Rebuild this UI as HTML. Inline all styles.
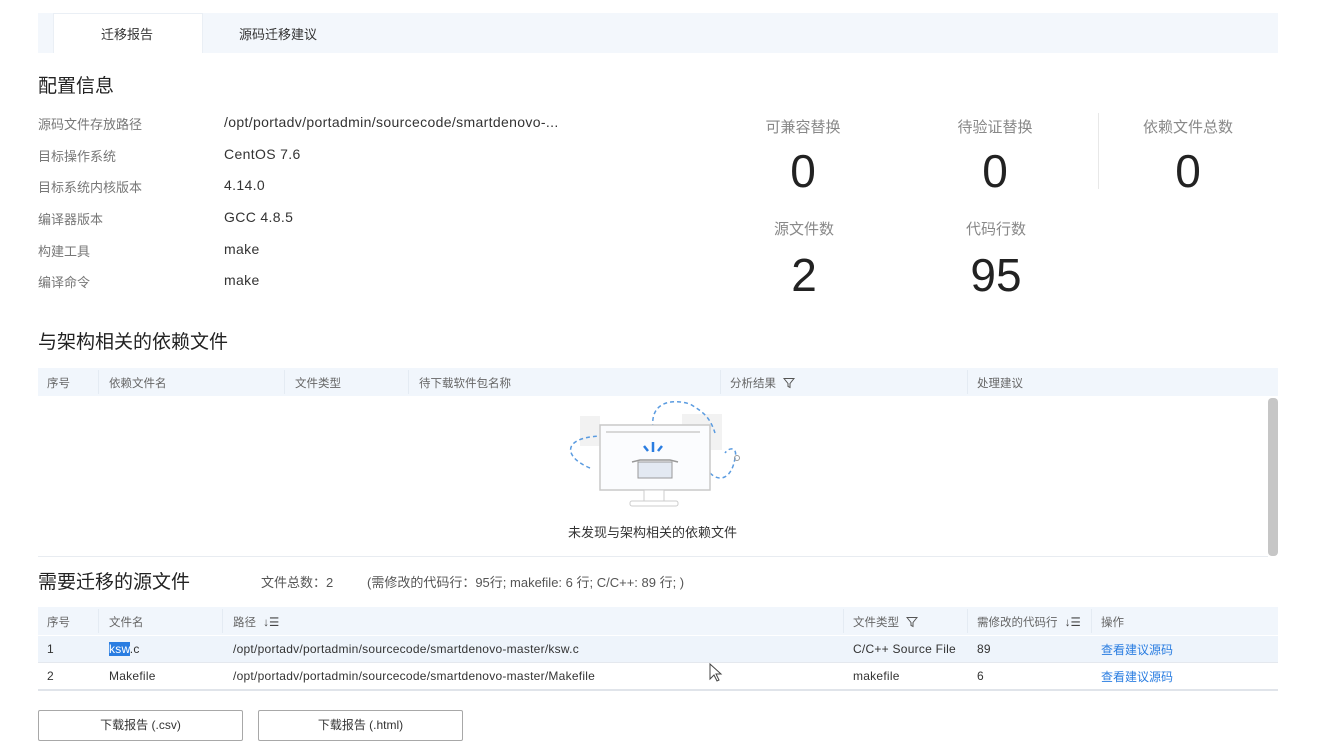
<!DOCTYPE html>
<html><head><meta charset="utf-8"><style>
*{margin:0;padding:0;box-sizing:border-box}
body{width:1324px;height:742px;background:#fff;position:relative;overflow:hidden;font-family:"Liberation Sans","Noto Sans CJK SC",sans-serif;color:#333;font-size:13px}
.a{position:absolute;white-space:nowrap}
.lbl{color:#777;font-size:13px}
.val{color:#333;font-size:14px;letter-spacing:0.35px}
.h{font-size:19px;color:#222}
.sl{color:#888;font-size:15px;transform:translateX(-50%)}
.sn{font-size:46px;color:#222;transform:translateX(-50%);line-height:1}
.th{color:#666;font-size:11.5px}
.sep{position:absolute;width:1px;background:#e4ebf3}
.td{font-size:12px;color:#333;letter-spacing:0.25px}
.lk{font-size:12px;color:#2a7de1}
.btn{position:absolute;border:1px solid #a8a8a8;border-radius:2px;font-size:12px;color:#333;text-align:center;line-height:28px}
</style></head><body>
<div class="a" style="left:38px;top:13px;width:1240px;height:40px;background:#f3f7fc"></div>
<div class="a" style="left:53px;top:13px;width:150px;height:40px;background:#fff;border:1px solid #eaeff5;border-bottom:none"></div>
<div class="a" style="left:101px;top:24px;font-size:13px;color:#333">迁移报告</div>
<div class="a" style="left:239px;top:24px;font-size:13px;color:#333">源码迁移建议</div>

<div class="a h" style="left:38px;top:71px">配置信息</div>
<div class="a lbl" style="left:38px;top:114px">源码文件存放路径</div><div class="a val" style="left:224px;top:114px">/opt/portadv/portadmin/sourcecode/smartdenovo-...</div>
<div class="a lbl" style="left:38px;top:146px">目标操作系统</div><div class="a val" style="left:224px;top:146px">CentOS 7.6</div>
<div class="a lbl" style="left:38px;top:177px">目标系统内核版本</div><div class="a val" style="left:224px;top:177px">4.14.0</div>
<div class="a lbl" style="left:38px;top:209px">编译器版本</div><div class="a val" style="left:224px;top:209px">GCC 4.8.5</div>
<div class="a lbl" style="left:38px;top:241px">构建工具</div><div class="a val" style="left:224px;top:241px">make</div>
<div class="a lbl" style="left:38px;top:272px">编译命令</div><div class="a val" style="left:224px;top:272px">make</div>

<div class="a sl" style="left:803px;top:116px">可兼容替换</div>
<div class="a sl" style="left:995px;top:116px">待验证替换</div>
<div class="a sl" style="left:1188px;top:116px">依赖文件总数</div>
<div class="a sn" style="left:803px;top:148px">0</div>
<div class="a sn" style="left:995px;top:148px">0</div>
<div class="a sn" style="left:1188px;top:148px">0</div>
<div class="sep" style="left:1098px;top:113px;height:76px;background:#e8e8e8"></div>
<div class="a sl" style="left:804px;top:218px">源文件数</div>
<div class="a sl" style="left:996px;top:218px">代码行数</div>
<div class="a sn" style="left:804px;top:252px">2</div>
<div class="a sn" style="left:996px;top:252px">95</div>

<div class="a h" style="left:38px;top:327px">与架构相关的依赖文件</div>
<div class="a" style="left:38px;top:368px;width:1240px;height:28px;background:#f1f6fc"></div>
<div class="sep" style="left:98px;top:370px;height:24px"></div>
<div class="sep" style="left:284px;top:370px;height:24px"></div>
<div class="sep" style="left:408px;top:370px;height:24px"></div>
<div class="sep" style="left:720px;top:370px;height:24px"></div>
<div class="sep" style="left:967px;top:370px;height:24px"></div>
<div class="a th" style="left:47px;top:375px">序号</div>
<div class="a th" style="left:109px;top:375px">依赖文件名</div>
<div class="a th" style="left:295px;top:375px">文件类型</div>
<div class="a th" style="left:419px;top:375px">待下载软件包名称</div>
<div class="a th" style="left:730px;top:375px">分析结果 <svg width="12" height="12" viewBox="0 0 12 12" style="vertical-align:-2px;margin-left:4px"><path d="M1 1.5h10L7 6.5v4L5 9.5v-3z" fill="none" stroke="#555" stroke-width="1"/></svg></div>
<div class="a th" style="left:977px;top:375px">处理建议</div>
<div class="a" style="left:1268px;top:398px;width:10px;height:158px;background:#c6c6c6;border-radius:4px"></div>

<svg class="a" style="left:560px;top:398px" width="190" height="115" viewBox="0 0 190 115">
<rect x="20" y="18" width="20" height="30" fill="#f2f2f2"/>
<rect x="122" y="16" width="40" height="36" fill="#f2f2f2"/>
<path d="M30 70 C5 60 0 40 40 38 C60 38 70 44 93 45" fill="none" stroke="#5a9be0" stroke-width="1.5" stroke-dasharray="4 3"/>
<path d="M93 30 C90 5 110 0 130 6 C145 15 150 20 155 35" fill="none" stroke="#5a9be0" stroke-width="1.5" stroke-dasharray="4 3"/>
<path d="M150 75 C160 85 172 80 175 60 C178 50 170 48 165 55" fill="none" stroke="#5a9be0" stroke-width="1.5" stroke-dasharray="4 3"/>
<circle cx="177" cy="60" r="2.5" fill="none" stroke="#999"/>
<rect x="40" y="27" width="110" height="65" fill="#fbfcfe" stroke="#c9c9c9" stroke-width="1.5"/>
<line x1="46" y1="34" x2="140" y2="34" stroke="#ccc" stroke-width="1.5"/>
<rect x="84" y="92" width="20" height="12" fill="#fff" stroke="#ccc"/>
<rect x="70" y="103" width="48" height="5" rx="2" fill="#fff" stroke="#ccc"/>
<path d="M72 64 L80 62 H110 L118 64" fill="none" stroke="#999" stroke-width="1.5"/>
<rect x="78" y="64" width="34" height="16" fill="#e3e9f2" stroke="#999"/>
<path d="M93 44 v10 M84 48 l4 5 M102 48 l-4 5" stroke="#2a7de1" stroke-width="2.5"/>
</svg>
<div class="a" style="left:568px;top:522px;font-size:13px;color:#333">未发现与架构相关的依赖文件</div>
<div class="a" style="left:38px;top:556px;width:1230px;height:1px;background:#e8ecf1"></div>

<div class="a h" style="left:38px;top:567px">需要迁移的源文件</div>
<div class="a" style="left:261px;top:572px;font-size:13px;color:#555">文件总数：2</div>
<div class="a" style="left:367px;top:572px;font-size:13px;color:#555">(需修改的代码行：95行; makefile: 6 行; C/C++: 89 行; )</div>

<div class="a" style="left:38px;top:607px;width:1240px;height:28px;background:#f1f6fc"></div>
<div class="sep" style="left:98px;top:609px;height:24px"></div>
<div class="sep" style="left:222px;top:609px;height:24px"></div>
<div class="sep" style="left:843px;top:609px;height:24px"></div>
<div class="sep" style="left:967px;top:609px;height:24px"></div>
<div class="sep" style="left:1091px;top:609px;height:24px"></div>
<div class="a th" style="left:47px;top:614px">序号</div>
<div class="a th" style="left:109px;top:614px">文件名</div>
<div class="a th" style="left:233px;top:614px">路径 <span style="margin-left:4px;color:#444">↓☰</span></div>
<div class="a th" style="left:853px;top:614px">文件类型 <svg width="12" height="12" viewBox="0 0 12 12" style="vertical-align:-2px;margin-left:4px"><path d="M1 1.5h10L7 6.5v4L5 9.5v-3z" fill="none" stroke="#555" stroke-width="1"/></svg></div>
<div class="a th" style="left:977px;top:614px">需修改的代码行 <span style="margin-left:4px;color:#444">↓☰</span></div>
<div class="a th" style="left:1101px;top:614px">操作</div>

<div class="a" style="left:38px;top:636px;width:1240px;height:26px;background:#eef4fb"></div>
<div class="a" style="left:38px;top:662px;width:1240px;height:1px;background:#e4e8ee"></div>
<div class="a" style="left:38px;top:689px;width:1240px;height:2px;background:#e0e4ea"></div>
<div class="a td" style="left:47px;top:642px">1</div>
<div class="a td" style="left:109px;top:642px"><span style="background:#2a7de1;color:#fff">ksw</span>.c</div>
<div class="a td" style="left:233px;top:642px">/opt/portadv/portadmin/sourcecode/smartdenovo-master/ksw.c</div>
<div class="a td" style="left:853px;top:642px">C/C++ Source File</div>
<div class="a td" style="left:977px;top:642px">89</div>
<div class="a lk" style="left:1101px;top:641px">查看建议源码</div>
<div class="a td" style="left:47px;top:669px">2</div>
<div class="a td" style="left:109px;top:669px">Makefile</div>
<div class="a td" style="left:233px;top:669px">/opt/portadv/portadmin/sourcecode/smartdenovo-master/Makefile</div>
<div class="a td" style="left:853px;top:669px">makefile</div>
<div class="a td" style="left:977px;top:669px">6</div>
<div class="a lk" style="left:1101px;top:668px">查看建议源码</div>
<svg class="a" style="left:709px;top:663px" width="14" height="20" viewBox="0 0 14 20"><path d="M1 1v15l4-4 3 6 2-1-3-6h5z" fill="#fff" stroke="#444" stroke-width="1"/></svg>

<div class="btn" style="left:38px;top:710px;width:205px;height:31px">下载报告 (.csv)</div>
<div class="btn" style="left:258px;top:710px;width:205px;height:31px">下载报告 (.html)</div>
</body></html>
